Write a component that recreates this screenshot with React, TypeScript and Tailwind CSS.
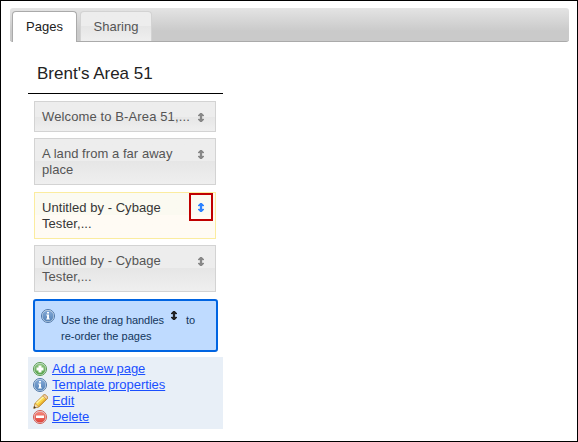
import type { ReactNode } from "react";

function DragHandle({ className }: { className: string }) {
  return (
    <svg
      className={`h-[9px] w-[6px] shrink-0 ${className}`}
      viewBox="0 0 6 9"
      fill="currentColor"
      stroke="currentColor"
      strokeWidth=".3"
    >
      <path d="M2 0h2v1h1v1h1v1H4v3h2v1H5v1H4v1H2V8H1V7H0V6h2V3H0V2h1V1h1z" />
    </svg>
  );
}

function RoundIcon({ id, light, dark, rim, children }: { id: string; light: string; dark: string; rim: string; children: ReactNode }) {
  return (
    <svg className="h-[14px] w-[14px] shrink-0" viewBox="0 0 14 14">
      <defs>
        <linearGradient id={id} x1="0" y1="0" x2="0" y2="1">
          <stop offset="0" stopColor={light} />
          <stop offset="1" stopColor={dark} />
        </linearGradient>
      </defs>
      <circle cx="7" cy="7" r="6.5" fill="#dfe9f0" stroke={rim} strokeWidth="1" />
      <circle cx="7" cy="7" r="5.6" fill={`url(#${id})`} />
      {children}
    </svg>
  );
}

function InfoIcon({ id }: { id: string }) {
  return (
    <RoundIcon id={id} light="#84a9d6" dark="#5583b8" rim="#4d76a8">
      <path d="M6 3h2v1.6H6zM5.3 5.5H8v4h.8v1H5.2v-1H6v-3h-.7z" fill="#fff" />
    </RoundIcon>
  );
}

function AddIcon() {
  return (
    <RoundIcon id="add" light="#92c786" dark="#55a247" rim="#579b4b">
      <path d="M5.500 3.500h3v2h2v3h-2v2h-3v-2h-2v-3h2z" fill="#fff" />
    </RoundIcon>
  );
}

function DeleteIcon() {
  return (
    <RoundIcon id="del" light="#f58a80" dark="#df4037" rim="#d35a50">
      <path d="M3 5.500h8v2.500h-8z" fill="#fff" />
    </RoundIcon>
  );
}

function PencilIcon() {
  return (
    <svg className="h-[15px] w-[16px] shrink-0" viewBox="0 0 16 15">
      <path d="M.8 14.200l1.400-5L10.600 1c1.200-1.100 4.800 1.500 3.800 3.600L6 12.800z" fill="#f9d648" stroke="#b5802a" strokeWidth=".9" />
      <path d="M3.500 9.300L11 2.200" stroke="#fff3a8" strokeWidth="1.500" />
      <path d="M5.600 11.900L13.400 4.400" stroke="#e2a52e" strokeWidth="1.200" />
      <path d="M.8 14.200l1.300-4.600 3.600 3.100z" fill="#f8dfb8" stroke="#b5802a" strokeWidth=".5" />
      <path d="M.6 14.400l.7-2.300 1.700 1.600z" fill="#333" />
      <path d="M10.800 1c1.100-1 4.400 1.400 3.500 3.300l-1 1-3.400-3.400z" fill="#f2cda0" stroke="#b98a51" strokeWidth=".6" />
    </svg>
  );
}

function PageCard({ title, active, highlighted }: { title: ReactNode; active?: boolean; highlighted?: boolean }) {
  return (
    <li
      className={`flex items-start justify-between border pt-[7px] pr-[11px] pb-[6px] pl-[7px] ${
        active
          ? "border-[#fbec9f] bg-linear-to-b from-[#fbfaf1] from-50% to-[#fffbf4] to-50% text-[#363636]"
          : "border-[#d3d3d3] bg-linear-to-b from-[#ededed] from-50% via-[#e6e6e6] via-50% to-[#efefef] text-[#555]"
      }`}
    >
      <span className="text-[13px] leading-[16px] tracking-[0.05px] whitespace-nowrap">{title}</span>
      {highlighted ? (
        <span className="-mt-[7px] -mr-[9px] flex h-[28px] w-[24px] items-center justify-center border-2 border-[#c00000] pt-px">
          <DragHandle className="text-[#2e83ff]" />
        </span>
      ) : (
        <DragHandle className="mt-[4px] text-[#888]" />
      )}
    </li>
  );
}

function ActionLink({ icon, children }: { icon: ReactNode; children: string }) {
  return (
    <li className="flex h-4 items-center">
      <span className="flex w-[19px] items-center">{icon}</span>
      <a href="#" className="text-[13px] leading-4 tracking-[-0.05px] text-[#1a4fff] underline">
        {children}
      </a>
    </li>
  );
}

export default function App() {
  return (
    <div className="h-[442px] w-[578px] overflow-hidden border border-black bg-white pt-[7px] pr-[8px] pl-[9px] font-['Liberation_Sans',Arial,sans-serif]">
      <nav className="flex h-[34px] items-start gap-[3px] rounded-[3px] border-b border-[#aaa] bg-linear-to-b from-[#e4e4e4] to-[#cacaca] to-70% pt-[3px] pl-[2px]">
        <a className="flex h-[31px] w-[65px] justify-center rounded-t-[4px] border border-b-0 border-[#aaa] bg-white pt-[7px] text-[13px] leading-4 text-[#212121]">
          Pages
        </a>
        <a className="flex h-[30px] w-[72px] justify-center rounded-t-[4px] border border-b-0 border-[#d3d3d3] bg-linear-to-b from-[#ededed] from-50% via-[#e6e6e6] via-50% to-[#efefef] pt-[7px] text-[13px] leading-4 text-[#555]">
          Sharing
        </a>
      </nav>

      <main className="ml-[18px] w-[195px]">
        <h1 className="h-[52px] border-b border-black pt-[22px] pl-[9px] text-[17px] leading-5 text-[#222]">
          Brent's Area 51
        </h1>
        <ul className="mt-[7px] ml-[6px] flex w-[182px] flex-col gap-[6px]">
          <PageCard title={<span className="tracking-[0.12px]">Welcome to B-Area 51,...</span>} />
          <PageCard title={<>A land from a far away<br />place</>} />
          <li className="-mt-[5px] h-0" />
          <PageCard title={<>Untitled by - Cybage<br />Tester,...</>} active highlighted />
          <PageCard title={<>Untitled by - Cybage<br />Tester,...</>} />
        </ul>

        <div className="mt-[7px] ml-[5px] flex h-[53px] w-[185px] rounded-[3px] border-2 border-[#0064e1] bg-[#bfdbff] pt-[8px] pl-[6px]">
          <InfoIcon id="info-note" />
          <p className="ml-[6px] text-[11px] leading-4 whitespace-nowrap text-[#13365c]">
            <span className="flex pt-[3px]">
              <span className="w-[110px] tracking-[-0.08px]">Use the drag handles</span>
              <DragHandle className="-mt-px mr-[9px] text-[#222]" />
              to
            </span>
            re-order the pages
          </p>
        </div>

        <ul className="mt-[5px] h-[72px] bg-[#e8eff7] pt-[4px] pl-[5px]">
          <ActionLink icon={<AddIcon />}>Add a new page</ActionLink>
          <ActionLink icon={<InfoIcon id="info-link" />}>Template properties</ActionLink>
          <ActionLink icon={<PencilIcon />}>Edit</ActionLink>
          <ActionLink icon={<DeleteIcon />}>Delete</ActionLink>
        </ul>
      </main>
    </div>
  );
}
